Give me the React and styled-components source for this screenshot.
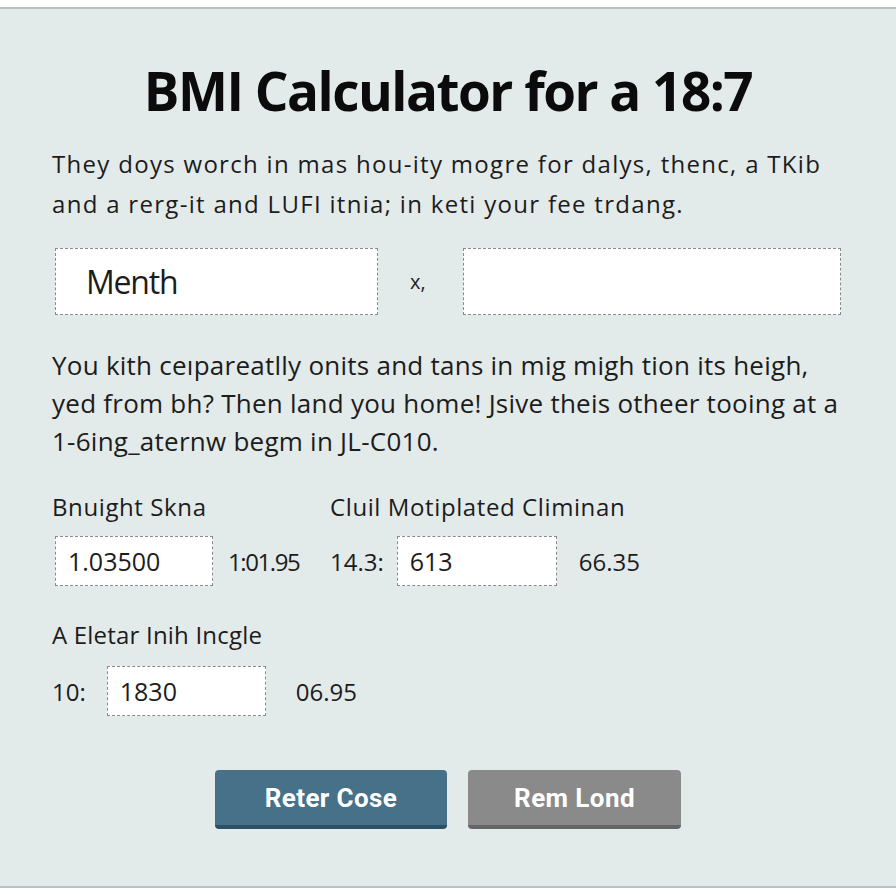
import React from "react";
import styled, { createGlobalStyle } from "styled-components";

const GlobalStyle = createGlobalStyle`
  html, body {
    margin: 0;
    padding: 0;
    background: #ffffff;
    overflow: hidden;
  }
  body {
    font-family: "Open Sans", "Liberation Sans", sans-serif;
    color: #1c1c1c;
  }
`;

const Panel = styled.div`
  margin-top: 7px;
  height: 881px;
  box-sizing: border-box;
  background: #e3eaea;
  border-top: 2px solid #b5c0c2;
  border-bottom: 2px solid #b5c0c2;
  padding: 0 52px;
  display: flex;
  flex-direction: column;
`;

const Title = styled.h1`
  margin: 52px 0 0;
  font-size: 53px;
  line-height: 60px;
  font-weight: 700;
  letter-spacing: -1.5px;
  color: #0b0b0b;
  text-align: center;
`;

const Paragraph = styled.p`
  margin: ${(p) => p.$top}px 0 0;
  font-size: ${(p) => p.$size}px;
  line-height: ${(p) => p.$lh}px;
  letter-spacing: ${(p) => p.$ls || 0}px;
  color: #1c1c1c;
  white-space: nowrap;
`;

const InputRow = styled.div`
  display: flex;
  align-items: center;
  margin: ${(p) => p.$top || 0}px 0 0 ${(p) => p.$left || 0}px;
`;

const TextField = styled.div`
  box-sizing: border-box;
  width: ${(p) => p.$w}px;
  height: ${(p) => p.$h}px;
  background: #ffffff;
  border: 1px dashed #8a8a8a;
  display: flex;
  align-items: center;
  padding-left: ${(p) => p.$pad || 12}px;
  font-size: ${(p) => p.$size || 24}px;
  letter-spacing: ${(p) => p.$ls || 0}px;
  color: #1c1c1c;
  margin-left: ${(p) => p.$ml || 0}px;
`;

const Sep = styled.span`
  font-size: 20px;
  margin: 0 37px 0 32px;
  color: #222;
`;

const Fields = styled.div`
  display: grid;
  grid-template-columns: 278px auto;
  margin-top: 32px;
`;

const Label = styled.div`
  font-size: 24px;
  line-height: 30px;
  letter-spacing: ${(p) => p.$ls || 0}px;
  color: #1c1c1c;
`;

const Value = styled.span`
  font-size: 24px;
  letter-spacing: ${(p) => p.$ls || 0}px;
  color: #1c1c1c;
  margin-left: ${(p) => p.$ml || 0}px;
`;

const Group = styled.div`
  margin-top: ${(p) => p.$top || 0}px;
`;

const ButtonRow = styled.div`
  display: flex;
  justify-content: center;
  gap: 21px;
  margin-top: 54px;
`;

const Button = styled.button`
  box-sizing: border-box;
  width: ${(p) => p.$w}px;
  height: 59px;
  border: none;
  border-bottom: 4px solid ${(p) => (p.$primary ? "#2c5167" : "#666666")};
  border-radius: 4px;
  background: ${(p) => (p.$primary ? "#467189" : "#8a8a8a")};
  color: #ffffff;
  font-family: Roboto, "Liberation Sans", sans-serif;
  font-weight: 700;
  font-size: 26px;
  letter-spacing: 0.4px;
  padding: 0;
  cursor: pointer;
`;

export default function App() {
  return (
    <>
      <GlobalStyle />
      <Panel>
        <Title>BMI Calculator for a 18:7</Title>
        <Paragraph $top={23} $size={24} $lh={40} $ls={1.3}>
          They doys worch in mas hou-ity mogre for dalys, thenc, a TKib
          <br />
          and a rerg-it and LUFI itnia; in keti your fee trdang.
        </Paragraph>
        <InputRow $top={24} $left={3}>
          <TextField $w={323} $h={67} $size={32} $pad={30} $ls={-1.2}>
            Menth
          </TextField>
          <Sep>x,</Sep>
          <TextField $w={378} $h={67} />
        </InputRow>
        <Paragraph $top={31} $size={26} $lh={38} $ls={0.25}>
          You kith ceıpareatlly onits and tans in mig migh tion its heigh,
          <br />
          yed from bh? Then land you home! Jsive theis otheer tooing at a
          <br />
          1-6ing_aternw begm in JL-C010.
        </Paragraph>
        <Fields>
          <div>
            <Label $ls={0.6}>Bnuight Skna</Label>
            <InputRow $top={14} $left={3}>
              <TextField $w={158} $h={50} $size={25}>
                1.03500
              </TextField>
              <Value $ml={15} $ls={-1.4}>
                1:01.95
              </Value>
            </InputRow>
          </div>
          <div>
            <Label $ls={0.6}>Cluil Motiplated Climinan</Label>
            <InputRow $top={14}>
              <Value>14.3:</Value>
              <TextField $w={160} $h={50} $size={25} $ml={13}>
                613
              </TextField>
              <Value $ml={22}>66.35</Value>
            </InputRow>
          </div>
        </Fields>
        <Group $top={34}>
          <Label $ls={0.2}>A Eletar Inih Incgle</Label>
          <InputRow $top={16}>
            <Value>10:</Value>
            <TextField $w={159} $h={50} $size={25} $ml={21}>
              1830
            </TextField>
            <Value $ml={30}>06.95</Value>
          </InputRow>
        </Group>
        <ButtonRow>
          <Button $primary $w={232}>
            Reter Cose
          </Button>
          <Button $w={213}>Rem Lond</Button>
        </ButtonRow>
      </Panel>
    </>
  );
}
